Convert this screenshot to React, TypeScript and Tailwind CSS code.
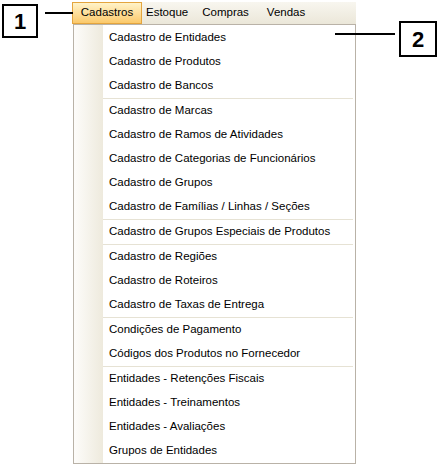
const items: { label: string; sep?: boolean }[] = [
  { label: "Cadastro de Entidades" },
  { label: "Cadastro de Produtos" },
  { label: "Cadastro de Bancos" },
  { label: "Cadastro de Marcas", sep: true },
  { label: "Cadastro de Ramos de Atividades" },
  { label: "Cadastro de Categorias de Funcionários" },
  { label: "Cadastro de Grupos" },
  { label: "Cadastro de Famílias / Linhas / Seções" },
  { label: "Cadastro de Grupos Especiais de Produtos", sep: true },
  { label: "Cadastro de Regiões", sep: true },
  { label: "Cadastro de Roteiros" },
  { label: "Cadastro de Taxas de Entrega" },
  { label: "Condições de Pagamento", sep: true },
  { label: "Códigos dos Produtos no Fornecedor" },
  { label: "Entidades - Retenções Fiscais", sep: true },
  { label: "Entidades - Treinamentos" },
  { label: "Entidades - Avaliações" },
  { label: "Grupos de Entidades" },
];

export default function App() {
  return (
    <div
      className="relative w-[440px] h-[465px] bg-white overflow-hidden text-black"
      style={{ fontFamily: '"Liberation Sans", Arial, sans-serif' }}
    >
      {/* menu */}
      <div className="absolute left-[72px] top-[2px] w-[284px]">
        {/* menu bar */}
        <div className="flex items-center h-[22px] bg-gradient-to-b from-[#f8f6ef] to-[#ebe7d9] text-[11.5px]">
          <div className="w-[70px] h-[22px] flex items-center justify-center border border-[#e4a53e] bg-gradient-to-b from-[#fff3c8] to-[#fbc96a]">
            Cadastros
          </div>
          <div className="ml-[4px]">Estoque</div>
          <div className="ml-[14px]">Compras</div>
          <div className="ml-[18px]">Vendas</div>
        </div>

        {/* dropdown */}
        <div className="ml-[1px] w-[283px] h-[440px] border border-[#b9b2a7] bg-white flex">
          <div className="w-[29px] bg-gradient-to-r from-[#fdfcfa] to-[#eeeadd]" />
          <div className="flex-1 flex flex-col pt-[1px]">
            {items.map((it) => (
              <div
                key={it.label}
                className={`flex-1 flex items-center pl-[6px] text-[11.5px] ${
                  it.sep ? "border-t border-[#e6e2d4]" : ""
                } mr-[2px]`}
              >
                {it.label}
              </div>
            ))}
          </div>
        </div>
      </div>

      {/* annotation 1 */}
      <div className="absolute left-[2px] top-[4px] w-[36px] h-[34px] border-2 border-black bg-white flex items-center justify-center font-bold text-[22px]">
        1
      </div>
      <div className="absolute left-[45px] top-[12px] w-[28px] h-[2px] bg-black" />

      {/* annotation 2 */}
      <div className="absolute left-[399px] top-[21px] w-[38px] h-[36px] border-2 border-black bg-white flex items-center justify-center font-bold text-[22px]">
        2
      </div>
      <div className="absolute left-[335px] top-[33px] w-[60px] h-[2px] bg-black" />
    </div>
  );
}
